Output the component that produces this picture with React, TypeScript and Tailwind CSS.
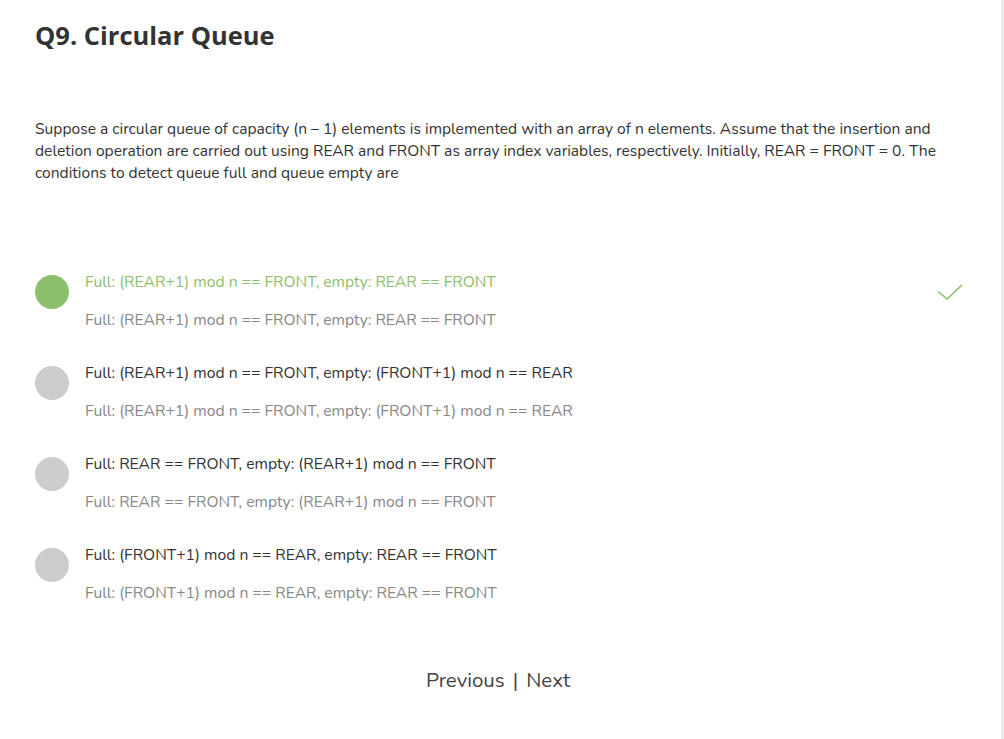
const QUESTION =
  "Suppose a circular queue of capacity (n – 1) elements is implemented with an array of n elements. Assume that the insertion and deletion operation are carried out using REAR and FRONT as array index variables, respectively. Initially, REAR = FRONT = 0. The conditions to detect queue full and queue empty are";

const OPTIONS = [
  { text: "Full: (REAR+1) mod n == FRONT, empty: REAR == FRONT", correct: true },
  { text: "Full: (REAR+1) mod n == FRONT, empty: (FRONT+1) mod n == REAR", correct: false },
  { text: "Full: REAR == FRONT, empty: (REAR+1) mod n == FRONT", correct: false },
  { text: "Full: (FRONT+1) mod n == REAR, empty: REAR == FRONT", correct: false },
];

export default function App() {
  return (
    <div
      className="h-[739px] w-[1004px] overflow-hidden bg-white border-r-[3px] border-[#ededed]"
      style={{ fontFamily: "Nunito, Lato, 'Open Sans', sans-serif" }}
    >
      <div className="pl-[35px] pr-[40px]">
        <h1
          className="pt-[18px] text-[25.5px] font-bold leading-[34px] text-[#333333]"
          style={{ fontFamily: "'Open Sans', sans-serif" }}
        >
          Q9. Circular Queue
        </h1>

        <p className="mt-[66px] text-[15.6px] leading-[22px] text-[#333333]">{QUESTION}</p>

        <div className="mt-[86px] flex flex-col gap-[29px]">
          {OPTIONS.map((opt) => (
            <div key={opt.text} className="flex items-start">
              <div
                className={`mt-[5px] h-[34px] w-[34px] shrink-0 rounded-full ${
                  opt.correct ? "bg-[#8cc06c]" : "bg-[#cccccc]"
                }`}
              />
              <div className="ml-[16px] flex-1">
                <div
                  className={`text-[15.7px] leading-[24px] ${
                    opt.correct ? "text-[#8cc06c]" : "text-[#333333]"
                  }`}
                >
                  {opt.text}
                </div>
                <div className="mt-[14px] text-[15.7px] leading-[24px] text-[#888888]">{opt.text}</div>
              </div>
              {opt.correct && (
                <svg width="27" height="20" viewBox="0 0 27 20" className="-mr-[2px] mt-[12px]">
                  <path d="M2 9.5 L11 17 L26 3" fill="none" stroke="#8cc06c" strokeWidth="1.6" />
                </svg>
              )}
            </div>
          ))}
        </div>

        <div className="mt-[61px] flex justify-center text-[20.5px] leading-[28px] text-[#444444]">
          <span>Previous</span>
          <span className="mx-[8px]">|</span>
          <span>Next</span>
        </div>
      </div>
    </div>
  );
}
